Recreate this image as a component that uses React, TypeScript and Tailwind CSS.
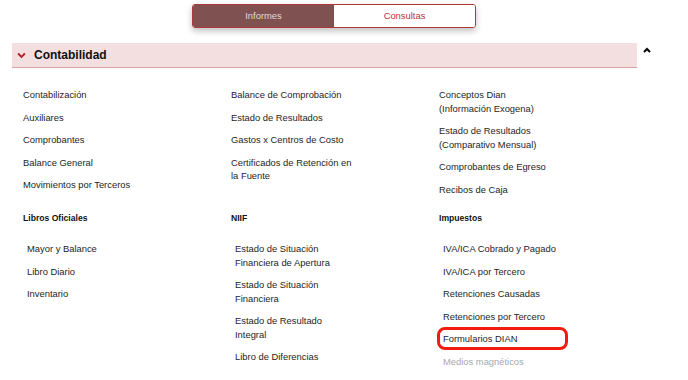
import React from 'react';

type Item = { lines: string[]; muted?: boolean; marked?: boolean };

const top: Item[][] = [
  [
    { lines: ['Contabilización'] },
    { lines: ['Auxiliares'] },
    { lines: ['Comprobantes'] },
    { lines: ['Balance General'] },
    { lines: ['Movimientos por Terceros'] },
  ],
  [
    { lines: ['Balance de Comprobación'] },
    { lines: ['Estado de Resultados'] },
    { lines: ['Gastos x Centros de Costo'] },
    { lines: ['Certificados de Retención en', 'la Fuente'] },
  ],
  [
    { lines: ['Conceptos Dian', '(Información Exogena)'] },
    { lines: ['Estado de Resultados', '(Comparativo Mensual)'] },
    { lines: ['Comprobantes de Egreso'] },
    { lines: ['Recibos de Caja'] },
  ],
];

const groups: { title: string; items: Item[] }[] = [
  {
    title: 'Libros Oficiales',
    items: [{ lines: ['Mayor y Balance'] }, { lines: ['Libro Diario'] }, { lines: ['Inventario'] }],
  },
  {
    title: 'NIIF',
    items: [
      { lines: ['Estado de Situación', 'Financiera de Apertura'] },
      { lines: ['Estado de Situación', 'Financiera'] },
      { lines: ['Estado de Resultado', 'Integral'] },
      { lines: ['Libro de Diferencias'] },
    ],
  },
  {
    title: 'Impuestos',
    items: [
      { lines: ['IVA/ICA Cobrado y Pagado'] },
      { lines: ['IVA/ICA por Tercero'] },
      { lines: ['Retenciones Causadas'] },
      { lines: ['Retenciones por Tercero'] },
      { lines: ['Formularios DIAN'], marked: true },
      { lines: ['Medios magnéticos'], muted: true },
    ],
  },
];

const Link: React.FC<{ item: Item }> = ({ item }) => (
  <div className={`relative text-[9.4px] leading-[13.5px] ${item.muted ? 'text-[#a8a8a8]' : 'text-[#1e1e1e]'}`}>
    {item.lines.map((l) => (
      <div key={l}>{l}</div>
    ))}
    {item.marked && (
      <span className="absolute -left-[6px] -top-[5px] h-[23px] w-[131px] rounded-[8px] border-[3px] border-[#f21b0f]" />
    )}
  </div>
);

const App: React.FC = () => {
  return (
    <div className="h-[380px] w-[688px] overflow-hidden bg-white" style={{ fontFamily: '"Liberation Sans", Arial, sans-serif' }}>
      <div className="pt-[4px] pl-[192px]">
        <div className="flex h-[24px] w-[284px] overflow-hidden rounded-[3px] border border-[#b1383a] shadow-[0_3px_6px_rgba(0,0,0,0.25)]">
          <div className="flex flex-1 items-center justify-center bg-[#7f5151] text-[9.4px] text-[#e6d6d6]">Informes</div>
          <div className="flex flex-1 items-center justify-center bg-white text-[9.4px] text-[#c0322f]">Consultas</div>
        </div>
      </div>

      <div className="mt-[15px] flex items-start pl-[12px]">
        <div className="flex h-[25px] w-[625px] items-center border-b-[1.5px] border-[#d9a3a3] bg-[#f3dfe0] pl-[5px]">
          <svg width="9" height="7" viewBox="0 0 10 7" className="mr-[8px]">
            <path d="M1.2 1.2 L5 5 L8.8 1.2" fill="none" stroke="#b3232a" strokeWidth="2.2" />
          </svg>
          <span className="text-[12px] font-bold text-[#111]">Contabilidad</span>
        </div>
        <svg width="8" height="6" viewBox="0 0 8 6" className="ml-[6px] mt-[4px]">
          <path d="M1 5 L4 2 L7 5" fill="none" stroke="#000" strokeWidth="2" />
        </svg>
      </div>

      <div className="grid grid-cols-[208px_208px_208px] pl-[23px] pt-[20px]">
        {top.map((col, i) => (
          <div key={i} className="flex flex-col gap-[9px]">
            {col.map((it) => (
              <Link key={it.lines.join()} item={it} />
            ))}
          </div>
        ))}
      </div>

      <div className="grid grid-cols-[208px_208px_208px] pl-[23px] pt-[16px]">
        {groups.map((g) => (
          <div key={g.title}>
            <div className="text-[8.6px] font-bold leading-[12px] text-[#111]">{g.title}</div>
            <div className="mt-[18px] flex flex-col gap-[9.1px] pl-[4px]">
              {g.items.map((it) => (
                <Link key={it.lines.join()} item={it} />
              ))}
            </div>
          </div>
        ))}
      </div>
    </div>
  );
};

export default App;
